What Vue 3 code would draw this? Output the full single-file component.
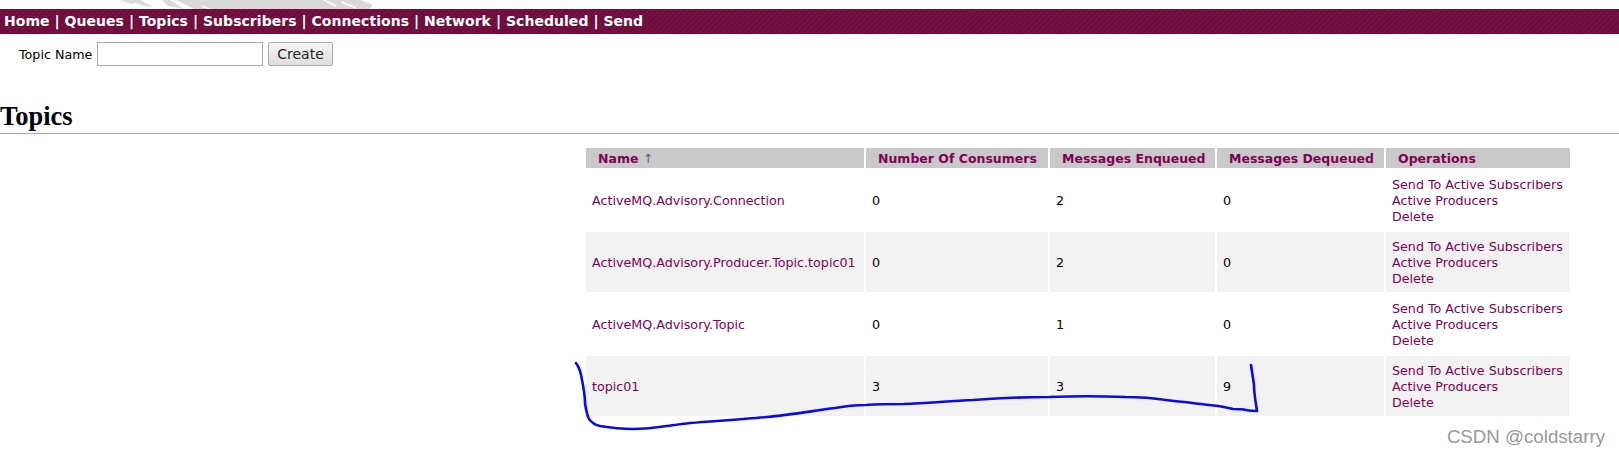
<template>
  <div class="page">
    <svg class="banner-smudge" width="270" height="9" viewBox="0 0 270 9">
      <path class="s1" d="M52 0 L250 0 C262 3 266 6 258 9 L84 9 L66 0 L60 0 L74 9 L58 6 Z" />
      <path class="s2" d="M10 0 L30 0 L44 7 L34 6 L26 3 L20 4 Z" />
      <path class="s3" d="M214 0 L226 6 M232 2 L246 8 M92 6 L100 9" />
    </svg>
    <div class="nav">
      <template v-for="(item, i) in navItems" :key="item">
        <a class="nav-link">{{ item }}</a><span v-if="i < navItems.length - 1"> | </span>
      </template>
    </div>
    <form class="create-form" @submit.prevent>
      <label class="create-label">Topic Name</label>
      <input class="create-input" type="text" />
      <button class="create-btn">Create</button>
    </form>
    <h2 class="title">Topics</h2>
    <table class="topics">
      <thead>
        <tr>
          <th class="col-name"><span>Name <i class="arrow">↑</i></span></th>
          <th class="col-num">Number Of Consumers</th>
          <th class="col-enq">Messages Enqueued</th>
          <th class="col-deq">Messages Dequeued</th>
          <th class="col-ops">Operations</th>
        </tr>
      </thead>
      <tbody>
        <tr v-for="(row, i) in topics" :key="row.name" :class="{ odd: i !== 0 && i !== 2 }">
          <td><a>{{ row.name }}</a></td>
          <td>{{ row.consumers }}</td>
          <td>{{ row.enqueued }}</td>
          <td>{{ row.dequeued }}</td>
          <td class="ops">
            <a>Send To Active Subscribers</a><br />
            <a>Active Producers</a><br />
            <a>Delete</a>
          </td>
        </tr>
      </tbody>
    </table>

    <!-- hand drawn marker over the last row -->
    <svg class="marker" width="1619" height="457" viewBox="0 0 1619 457">
      <path d="M576 363 C579 367 581 373 582 380 C584 390 585 397 585 403 C586 410 587 415 589 419 C592 423 595 425 600 426 C612 428 622 429 633 429 C652 429 671 425 690 423 C715 421 745 419 767 417 C790 415 812 411 835 408 C846 406 856 405 866 405 C880 404 892 404 904 404 C928 403 950 401 973 400 C1000 398 1025 397 1049 397 C1075 396 1100 396 1125 397 C1140 397 1153 398 1166 400 C1185 402 1200 404 1218 406 C1224 407 1228 408 1233 409 C1238 409 1242 409 1246 410 C1250 411 1253 411 1257 411 C1256 403 1254 395 1254 385 C1253 378 1252 372 1251 365" />
    </svg>
    <div class="watermark">CSDN @coldstarry</div>
  </div>
</template>

<script setup>
const navItems = ['Home', 'Queues', 'Topics', 'Subscribers', 'Connections', 'Network', 'Scheduled', 'Send']

const topics = [
  { name: 'ActiveMQ.Advisory.Connection', consumers: 0, enqueued: 2, dequeued: 0 },
  { name: 'ActiveMQ.Advisory.Producer.Topic.topic01', consumers: 0, enqueued: 2, dequeued: 0 },
  { name: 'ActiveMQ.Advisory.Topic', consumers: 0, enqueued: 1, dequeued: 0 },
  { name: 'topic01', consumers: 3, enqueued: 3, dequeued: 9 }
]
</script>

<style>
body {
  margin: 0;
  background: #fff;
}
</style>

<style scoped>
.page {
  position: relative;
  width: 1619px;
  height: 457px;
  overflow: hidden;
  padding-top: 9px;
  box-sizing: border-box;
  font-family: "DejaVu Sans", Verdana, sans-serif;
  font-size: 12.7px;
  color: #000;
}

.banner-smudge {
  position: absolute;
  left: 110px;
  top: 0;
}

.s1,
.s2 {
  fill: #d9d9d9;
}

.s3 {
  fill: none;
  stroke: #fff;
  stroke-width: 1.5;
}

.nav {
  height: 25px;
  line-height: 24px;
  padding-left: 4px;
  font-size: 14px;
  letter-spacing: 0.04px;
  font-weight: bold;
  color: #fff;
  white-space: pre;
  background: repeating-linear-gradient(135deg, #6d0c3c 0 2px, #731241 2px 4px);
}

.create-form {
  display: flex;
  align-items: center;
  gap: 4px;
  height: 24px;
  margin: 8px 0 0 19px;
}

.create-label {
  min-width: 74px;
  font-size: 12.7px;
}

.create-input {
  width: 166px;
  height: 24px;
  box-sizing: border-box;
  border: 1px solid #aaa;
  background: #fff;
  padding: 0;
}

.create-btn {
  width: 65px;
  height: 24px;
  margin-left: 1px;
  border: 1px solid #aaa;
  border-radius: 2px;
  background: linear-gradient(#f6f6f6, #dedede);
  font-family: "DejaVu Sans", sans-serif;
  font-size: 14px;
  color: #222;
  padding: 0;
}

.title {
  margin: 38px 0 0;
  padding-bottom: 4px;
  height: 25px;
  line-height: 25px;
  font-family: "Liberation Serif", serif;
  font-size: 26.5px;
  font-weight: bold;
  border-bottom: 1px solid #aaa;
}

.topics {
  margin: 12px 0 0 584px;
  border-collapse: separate;
  border-spacing: 2px;
  table-layout: fixed;
  width: 988px;
  font-size: 12.7px;
}

.topics th {
  height: 20px;
  padding: 0 0 0 12px;
  box-sizing: border-box;
  background: #c9c9c9;
  color: #800055;
  text-align: left;
  font-size: 12.5px;
  font-weight: bold;
}

.col-name { width: 278px; }
.col-num { width: 182px; }
.col-enq { width: 165px; }
.col-deq { width: 167px; }
.col-ops { width: 184px; }

.arrow {
  font-style: normal;
  font-weight: normal;
  color: #5a5a8a;
}

.topics td {
  height: 60px;
  box-sizing: border-box;
  padding: 0 6px;
  color: #000;
}

.topics td.ops {
  padding-top: 2px;
  line-height: 16px;
}

.topics tr.odd td {
  background: #f2f2f2;
}

.topics a {
  color: #800055;
}

.marker {
  position: absolute;
  left: 0;
  top: 0;
  pointer-events: none;
}

.marker path {
  fill: none;
  stroke: #0a0ae6;
  stroke-width: 2.6;
  stroke-linecap: round;
  stroke-linejoin: round;
}

.watermark {
  position: absolute;
  right: 14px;
  bottom: 9px;
  font-family: "Liberation Sans", sans-serif;
  font-size: 18.7px;
  color: #999;
}
</style>
